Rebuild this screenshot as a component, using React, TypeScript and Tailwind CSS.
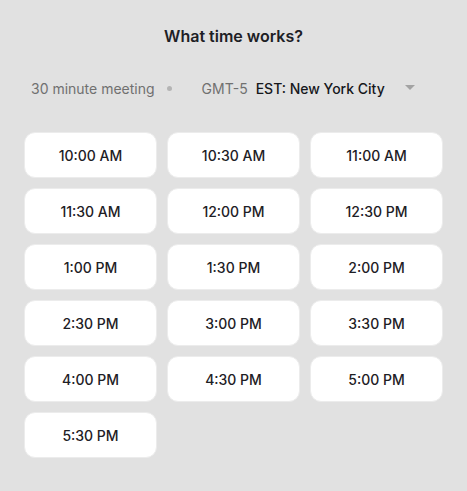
import React from 'react';

const slots = [
  '10:00 AM', '10:30 AM', '11:00 AM',
  '11:30 AM', '12:00 PM', '12:30 PM',
  '1:00 PM', '1:30 PM', '2:00 PM',
  '2:30 PM', '3:00 PM', '3:30 PM',
  '4:00 PM', '4:30 PM', '5:00 PM',
  '5:30 PM',
];

export default function App() {
  return (
    <div
      className="w-[467px] h-[491px] bg-[#e1e1e1] text-[#1d2025]"
      style={{ fontFamily: 'Inter, "Noto Sans", sans-serif' }}
    >
      <h1 className="pt-[26px] text-center text-[16px] leading-5 font-semibold">
        What time works?
      </h1>

      <div className="flex items-center mt-[32px] pl-[31px] h-5 text-[14px]">
        <span className="text-[#707070]">30 minute meeting</span>
        <span className="ml-3 w-[5px] h-[5px] rounded-full bg-[#b4b4b4]" />
        <span className="ml-[30px] text-[#707070]">GMT-5</span>
        <span className="ml-2 font-medium text-[#16181c]">EST: New York City</span>
        <svg className="ml-[20px]" width="10" height="6" viewBox="0 0 10 6">
          <path d="M0 0 L10 0 L5 5 Z" fill="#a3a3a3" />
        </svg>
      </div>

      <div className="grid grid-cols-3 gap-[10px] px-6 mt-[34px]">
        {slots.map((s) => (
          <button
            key={s}
            className="h-[46px] rounded-[11px] bg-white border border-[#ececec] text-[14px] font-medium text-[#1d2025]"
          >
            {s}
          </button>
        ))}
      </div>
    </div>
  );
}
